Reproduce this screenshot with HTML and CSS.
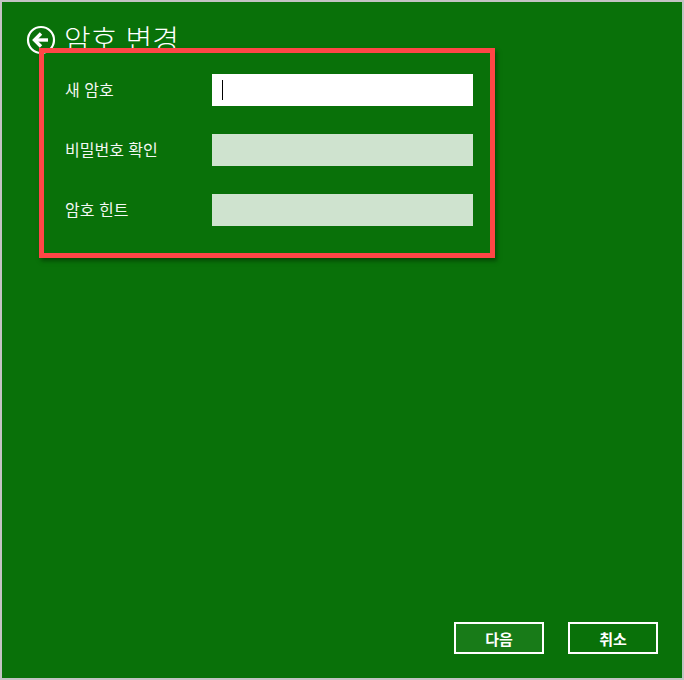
FILE: index.html
```html
<!DOCTYPE html>
<html lang="ko">
<head>
<meta charset="utf-8">
<link rel="stylesheet" href="styles.css">
</head>
<body>
<div class="window">
  <header class="header">
    <svg class="back" width="30" height="30" viewBox="0 0 30 30">
      <circle cx="15" cy="15" r="13" fill="none" stroke="#fff" stroke-width="2.2"/>
      <path d="M9 15 H22" stroke="#fff" stroke-width="3.4" fill="none"/>
      <path d="M15 8.5 L8.5 15 L15 21.5" stroke="#fff" stroke-width="3.4" fill="none" stroke-linejoin="miter"/>
    </svg>
    <h1 class="title">암호 변경</h1>
  </header>
  <section class="form">
    <div class="row">
      <label class="label">새 암호</label>
      <div class="field active"><span class="caret"></span></div>
    </div>
    <div class="row">
      <label class="label">비밀번호 확인</label>
      <div class="field"></div>
    </div>
    <div class="row">
      <label class="label">암호 힌트</label>
      <div class="field"></div>
    </div>
  </section>
  <div class="spacer"></div>
  <footer class="footer">
    <button class="btn primary">다음</button>
    <button class="btn">취소</button>
  </footer>
</div>
</body>
</html>
```
FILE: styles.css
```css
* { box-sizing: border-box; }
html, body { margin: 0; padding: 0; }
body {
  font-family: "Noto Sans CJK KR", "Noto Sans", sans-serif;
  background: #c8c8c8;
}
.window {
  width: 684px;
  height: 680px;
  border: 2px solid #c3c3c3;
  background: #097109;
  display: flex;
  flex-direction: column;
  color: #fff;
}
.header {
  height: 46px;
  display: flex;
  align-items: center;
  padding-left: 24px;
  padding-top: 30px;
}
.back { flex: none; display: block; }
.title {
  margin: -5px 0 0 8px;
  font-size: 29px;
  font-weight: 300;
  line-height: 30px;
  color: #fff;
  white-space: nowrap;
}
.form {
  margin-left: 37px;
  width: 456px;
  height: 210px;
  border: 5px solid #ff4646;
  box-shadow: 2px 3px 4px rgba(0, 40, 0, 0.55);
  padding: 21px 17px 0 21px;
  display: flex;
  flex-direction: column;
  gap: 28px;
  position: relative;
}
.row {
  display: flex;
  align-items: center;
  height: 32px;
}
.label {
  width: 147px;
  font-size: 16px;
  color: #f4f8f4;
  white-space: nowrap;
  margin-top: -2px;
}
.field {
  width: 261px;
  height: 32px;
  background: #cfe3cf;
  display: flex;
  align-items: center;
  padding-left: 10px;
}
.field.active { background: #fff; }
.caret {
  width: 1px;
  height: 20px;
  background: #000;
}
.spacer { flex: 1; }
.footer {
  display: flex;
  justify-content: flex-end;
  gap: 24px;
  padding: 0 24px 24px 0;
}
.btn {
  width: 90px;
  height: 32px;
  border: 2px solid #fff;
  background: transparent;
  color: #fff;
  font-family: "Noto Sans CJK KR", sans-serif;
  font-size: 15px;
  font-weight: 700;
  padding: 0;
}
.btn.primary { background: #187b18; }
```
